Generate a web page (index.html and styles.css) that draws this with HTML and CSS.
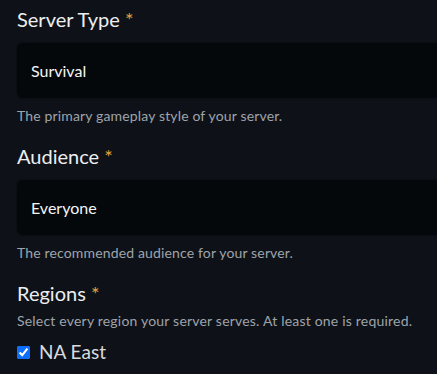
FILE: index.html
```html
<!DOCTYPE html>
<html lang="en">
<head>
    <meta charset="UTF-8">
    <title>Server settings</title>
    <link rel="stylesheet" href="styles.css">
</head>
<body>
    <form class="server-form">
        <div class="field">
            <label class="field-label" for="serverType">Server Type <span class="req">*</span></label>
            <div class="select-box" id="serverType">Survival</div>
            <p class="help">The primary gameplay style of your server.</p>
        </div>

        <div class="field">
            <label class="field-label" for="audience">Audience <span class="req">*</span></label>
            <div class="select-box" id="audience">Everyone</div>
            <p class="help">The recommended audience for your server.</p>
        </div>

        <div class="field">
            <div class="field-label">Regions <span class="req">*</span></div>
            <p class="help help-top">Select every region your server serves. At least one is required.</p>
            <label class="check-row">
                <input type="checkbox" checked>
                <span>NA East</span>
            </label>
        </div>
    </form>
</body>
</html>
```

FILE: styles.css
```css
* {
    margin: 0;
    padding: 0;
    box-sizing: border-box;
}

html, body {
    background: #0e1218;
    overflow: hidden;
}

body {
    font-family: Lato, "Open Sans", sans-serif;
    color: #e6e8ea;
    padding: 7px 0 0 17px;
}

.server-form {
    width: 480px;
    display: flex;
    flex-direction: column;
    gap: 18px;
}

.field-label {
    display: block;
    font-size: 20px;
    line-height: 24px;
    color: #eceef0;
}

.req {
    color: #e3a23b;
}

/* 下拉框 */
.select-box {
    margin-top: 12px;
    height: 55px;
    display: flex;
    align-items: center;
    padding-left: 14px;
    background: #05080b;
    border-radius: 6px;
    box-shadow: 0 0 2px rgba(0,0,0,0.6);
    font-size: 16px;
    color: #f4f5f6;
}

.help {
    margin-top: 8px;
    font-size: 14px;
    letter-spacing: 0.15px;
    line-height: 20px;
    color: #9ea4ab;
}

.help-top {
    margin-top: 6px;
    letter-spacing: 0.2px;
}

.check-row {
    margin-top: 11px;
    display: flex;
    align-items: center;
    gap: 9px;
    font-size: 19px;
    line-height: 20px;
    color: #d8dadd;
}

.check-row input {
    width: 13px;
    height: 13px;
    margin: 0;
    accent-color: #0d6efd;
}
```
